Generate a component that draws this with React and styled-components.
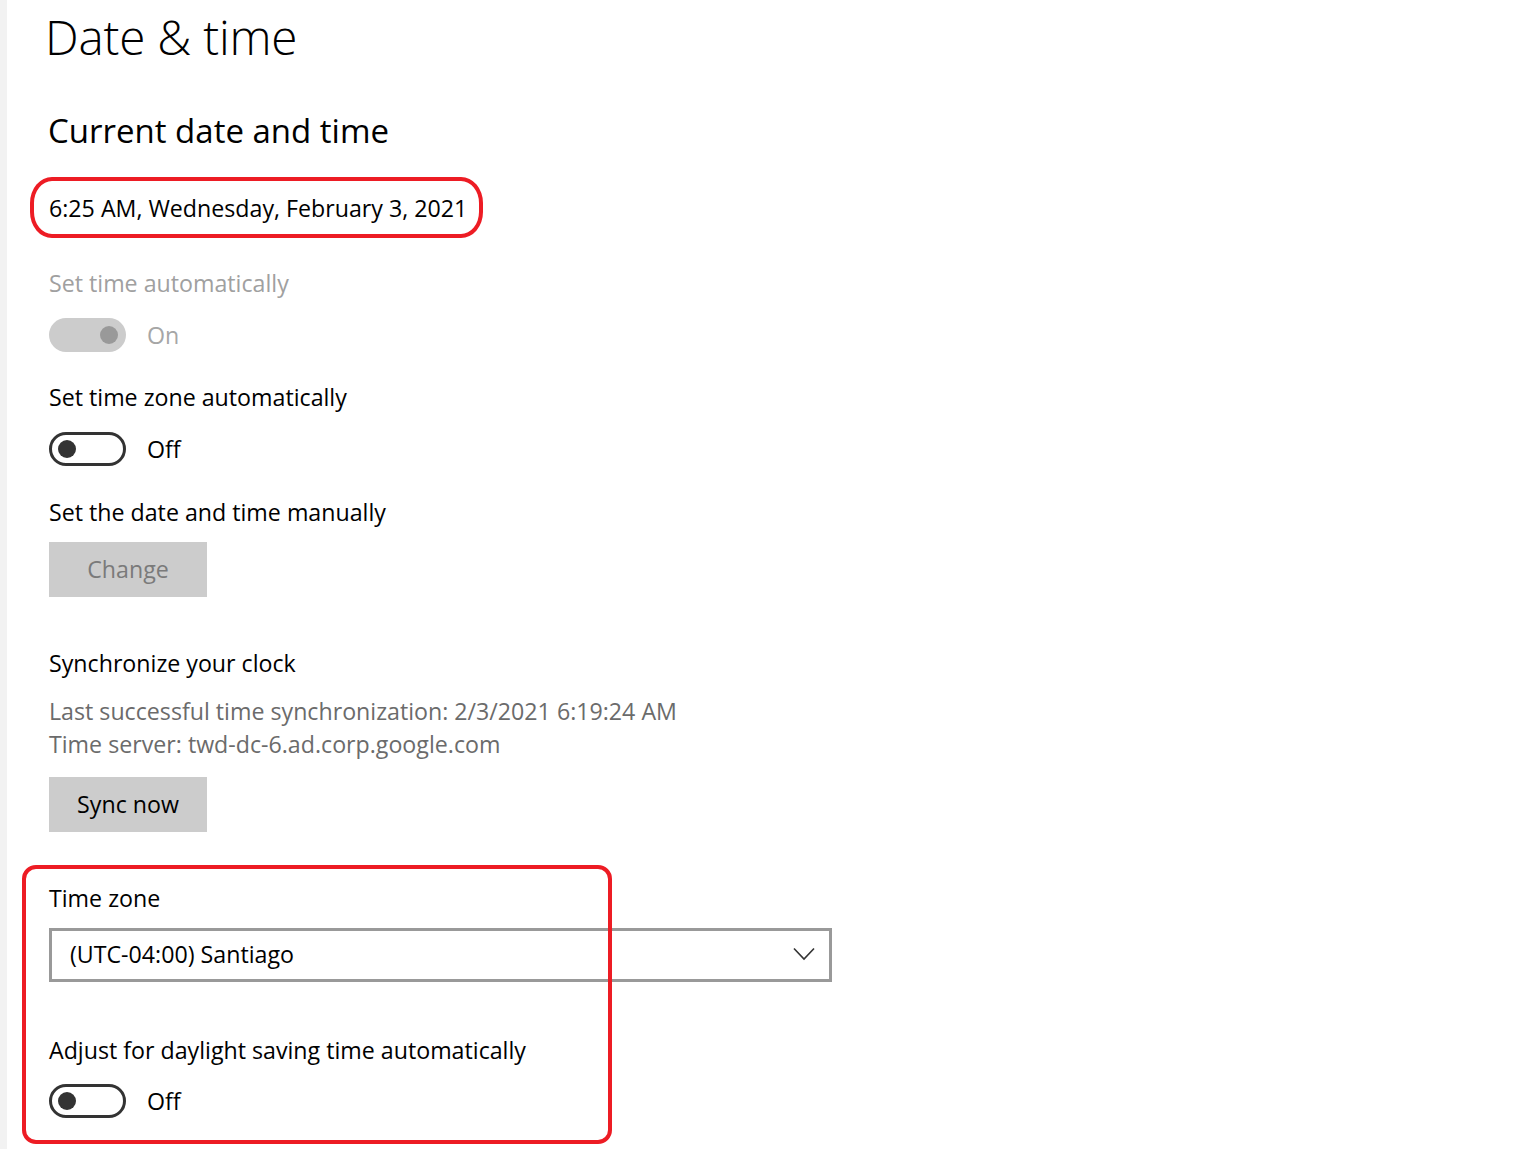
import React from 'react';
import styled, { createGlobalStyle } from 'styled-components';

const GlobalStyle = createGlobalStyle`
  html, body {
    margin: 0;
    padding: 0;
    background: #ffffff;
  }
  body {
    font-family: "Open Sans", "Noto Sans", sans-serif;
    color: #000000;
  }
`;

const Page = styled.div`
  display: flex;
  min-height: 1149px;
  width: 1536px;
  overflow: hidden;
`;

const Strip = styled.div`
  width: 7px;
  flex: none;
  background: #f2f2f2;
`;

const Main = styled.main`
  display: flex;
  flex-direction: column;
  align-items: flex-start;
  padding-left: 42px;
`;

const Title = styled.h1`
  margin: 0;
  margin-left: -4px;
  font-size: 47.6px;
  font-weight: 300;
  line-height: 74px;
  letter-spacing: -0.2px;
`;

const SectionTitle = styled.h2`
  margin: 37px 0 0 -1px;
  font-size: 33px;
  font-weight: 400;
  line-height: 40px;
`;

const Text = styled.div`
  margin-top: ${p => p.$mt || 0}px;
  font-size: 23.2px;
  line-height: ${p => p.$lh || 32}px;
  color: ${p => p.$color || '#000'};
  white-space: nowrap;
`;

const Highlight = styled.div`
  position: relative;
  margin-top: ${p => p.$mt || 0}px;
`;

const Oval = styled.div`
  position: absolute;
  left: -19px;
  top: -15px;
  width: 453px;
  height: 61px;
  box-sizing: border-box;
  border: 4px solid #ed1c24;
  border-radius: 22px / 26px;
  pointer-events: none;
`;

const Box = styled.div`
  position: absolute;
  left: -27px;
  top: -17px;
  width: 590px;
  height: 279px;
  box-sizing: border-box;
  border: 4px solid #ed1c24;
  border-radius: 14px;
  pointer-events: none;
`;

const ToggleRow = styled.div`
  display: flex;
  align-items: center;
  gap: 21px;
  margin-top: ${p => p.$mt || 0}px;
  height: 34px;
  font-size: 23.2px;
  color: ${p => (p.$disabled ? '#a6a6a6' : '#000')};
`;

const Toggle = styled.div`
  width: 77px;
  height: 34px;
  box-sizing: border-box;
  border-radius: 17px;
  display: flex;
  align-items: center;
  justify-content: ${p => (p.$on ? 'flex-end' : 'flex-start')};
  padding: 0 ${p => (p.$on ? '8px' : '6px')};
  background: ${p => (p.$disabled ? '#cccccc' : '#ffffff')};
  border: ${p => (p.$disabled ? 'none' : '3px solid #333333')};
`;

const Knob = styled.span`
  width: 18px;
  height: 18px;
  border-radius: 50%;
  background: ${p => (p.$disabled ? '#999999' : '#333333')};
`;

const Button = styled.button`
  margin-top: ${p => p.$mt || 0}px;
  width: 158px;
  height: 55px;
  border: none;
  background: #cccccc;
  font-family: inherit;
  font-size: 23.2px;
  color: ${p => (p.disabled ? '#7a7a7a' : '#000')};
  padding: 0 0 2px;
`;

const Select = styled.div`
  margin-top: ${p => p.$mt || 0}px;
  width: 783px;
  height: 54px;
  box-sizing: border-box;
  border: 3px solid #999999;
  display: flex;
  align-items: center;
  justify-content: space-between;
  padding: 0 14px 2px 18px;
  font-size: 23.2px;
`;

const Chevron = () => (
  <svg width="22" height="14" viewBox="0 0 22 14" fill="none">
    <path d="M1 1.5 L11 12 L21 1.5" stroke="#333" strokeWidth="1.6" />
  </svg>
);

const Switch = ({ on, disabled, label, mt }) => (
  <ToggleRow $mt={mt} $disabled={disabled}>
    <Toggle $on={on} $disabled={disabled}>
      <Knob $disabled={disabled} />
    </Toggle>
    <span>{label}</span>
  </ToggleRow>
);

export default function App() {
  return (
    <>
      <GlobalStyle />
      <Page>
        <Strip />
        <Main>
          <Title>Date &amp; time</Title>
          <SectionTitle>Current date and time</SectionTitle>
          <Highlight $mt={41}>
            <Text>6:25 AM, Wednesday, February 3, 2021</Text>
            <Oval />
          </Highlight>

          <Text $mt={43} $color="#a0a0a0">Set time automatically</Text>
          <Switch on disabled label="On" mt={19} />

          <Text $mt={29}>Set time zone automatically</Text>
          <Switch label="Off" mt={19} />

          <Text $mt={30}>Set the date and time manually</Text>
          <Button disabled $mt={14}>Change</Button>

          <Text $mt={50}>Synchronize your clock</Text>
          <Text $mt={16} $lh={33} $color="#6b6b6b">
            Last successful time synchronization: 2/3/2021 6:19:24 AM
            <br />
            Time server: twd-dc-6.ad.corp.google.com
          </Text>
          <Button $mt={16}>Sync now</Button>

          <Highlight $mt={50}>
            <Text>Time zone</Text>
            <Select $mt={14}>
              <span>(UTC-04:00) Santiago</span>
              <Chevron />
            </Select>
            <Text $mt={52}>Adjust for daylight saving time automatically</Text>
            <Switch label="Off" mt={18} />
            <Box />
          </Highlight>
        </Main>
      </Page>
    </>
  );
}
